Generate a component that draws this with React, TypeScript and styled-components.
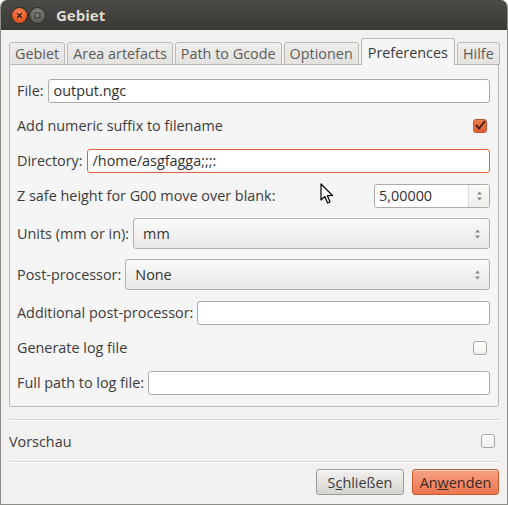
import React from "react";
import styled, { createGlobalStyle } from "styled-components";

const Global = createGlobalStyle`
  html, body { margin: 0; padding: 0; background: #ffffff; }
  body { font-family: "Open Sans", "DejaVu Sans", sans-serif; font-size: 14.4px; color: #3c3c3c; }
`;

const Window = styled.div`
  position: relative;
  width: 508px;
  height: 505px;
  box-sizing: border-box;
  display: flex;
  flex-direction: column;
  background: #f2f1f0;
  border-radius: 7px 7px 0 0;
  overflow: hidden;
  border-left: 1px solid #8f8d89;
  border-right: 1px solid #8f8d89;
  border-bottom: 1px solid #8f8d89;
`;

const TitleBar = styled.div`
  height: 30px;
  flex: none;
  display: flex;
  align-items: center;
  padding-left: 11px;
  gap: 3px;
  background: linear-gradient(#4b4a46, #3a3935);
`;

const RoundButton = styled.div<{ $close?: boolean }>`
  width: 15px;
  height: 15px;
  border-radius: 50%;
  display: flex;
  align-items: center;
  justify-content: center;
  background: ${(p) =>
    p.$close
      ? "radial-gradient(circle at 50% 35%, #f78a5e, #e35420 70%)"
      : "radial-gradient(circle at 50% 35%, #8e8c88, #5e5d59 70%)"};
  box-shadow: 0 0 0 1px #2e2d29;
`;

const Title = styled.div`
  margin-left: 8px;
  color: #dfdbd2;
  font-weight: bold;
  font-size: 15px;
`;

const Body = styled.div`
  flex: 1;
  display: flex;
  flex-direction: column;
  padding: 9px 8px 0 8px;
`;

const TabRow = styled.div`
  display: flex;
  align-items: flex-end;
  gap: 2px;
  height: 26px;
  position: relative;
  z-index: 1;
  margin-bottom: -1px;
`;

const Tab = styled.div<{ $active?: boolean }>`
  height: ${(p) => (p.$active ? "27px" : "23px")};
  box-sizing: border-box;
  padding: 0 ${(p) => (p.$active ? "6px" : "5px")};
  display: flex;
  align-items: center;
  border: 1px solid #bdbab5;
  border-bottom: ${(p) => (p.$active ? "none" : "1px solid #bdbab5")};
  border-radius: 3px 3px 0 0;
  background: ${(p) => (p.$active ? "#f5f5f5" : "linear-gradient(#eeedeb, #e3e2df)")};
  color: ${(p) => (p.$active ? "#3c3c3c" : "#5d5d5b")};
  white-space: nowrap;
`;

const Panel = styled.div`
  height: 343px;
  box-sizing: border-box;
  border: 1px solid #bdbab5;
  border-radius: 0 3px 3px 3px;
  background: #f5f5f5;
  padding: 13px 8px 0 7px;
  display: flex;
  flex-direction: column;
  gap: 10px;
`;

const Row = styled.div<{ $h?: number }>`
  height: ${(p) => p.$h ?? 25}px;
  display: flex;
  align-items: center;
  gap: 4px;
`;

const Label = styled.span`
  white-space: nowrap;
  flex: none;
`;

const Spacer = styled.div`
  flex: 1;
`;

const Entry = styled.div<{ $focus?: boolean; $w?: number }>`
  flex: ${(p) => (p.$w ? "none" : "1")};
  width: ${(p) => (p.$w ? `${p.$w}px` : "auto")};
  height: 24px;
  box-sizing: border-box;
  border: 1px solid ${(p) => (p.$focus ? "#e0643a" : "#aeaba6")};
  border-radius: 3px;
  background: #ffffff;
  display: flex;
  align-items: center;
  padding-left: 5px;
  color: #2f2f2f;
  overflow: hidden;
`;

const Spin = styled(Entry)`
  padding-left: 4px;
  justify-content: space-between;
  padding-right: 0;
`;

const SpinArrows = styled.div`
  width: 20px;
  height: 100%;
  border-left: 1px solid #dedcd9;
  display: flex;
  align-items: center;
  justify-content: center;
  background: linear-gradient(#fbfbfa, #eeedeb);
`;

const Combo = styled.div`
  flex: 1;
  height: 31px;
  box-sizing: border-box;
  border: 1px solid #b3b0ab;
  border-radius: 3px;
  background: linear-gradient(#fafafa, #e9e8e6);
  display: flex;
  align-items: center;
  justify-content: space-between;
  padding: 0 8px 0 9px;
  color: #333;
`;

const Check = styled.div<{ $on?: boolean }>`
  width: 14px;
  height: 14px;
  box-sizing: border-box;
  border-radius: 3px;
  border: 1px solid ${(p) => (p.$on ? "#b8532f" : "#a9a6a1")};
  background: ${(p) => (p.$on ? "linear-gradient(#ee7a4f, #dd5f32)" : "linear-gradient(#ffffff, #f1f0ee)")};
  display: flex;
  align-items: center;
  justify-content: center;
  margin-right: 3px;
  flex: none;
`;

const Separator = styled.div`
  height: 1px;
  background: #d9d7d3;
  border-bottom: 1px solid #ffffff;
`;

const Gap = styled.div`
  height: 12px;
`;

const PreviewRow = styled.div`
  height: 40px;
  display: flex;
  align-items: center;
  justify-content: space-between;
  padding: 0 1px 0 0;
`;

const Buttons = styled.div`
  display: flex;
  justify-content: flex-end;
  gap: 8px;
  padding-top: 6px;
`;

const Button = styled.div<{ $primary?: boolean }>`
  height: 26px;
  box-sizing: border-box;
  width: ${(p) => (p.$primary ? "87px" : "88px")};
  border-radius: 3px;
  border: 1px solid ${(p) => (p.$primary ? "#c65a33" : "#9d9b97")};
  background: ${(p) =>
    p.$primary ? "linear-gradient(#f7a283, #ec7550)" : "linear-gradient(#f2f1ef, #d6d4d0)"};
  color: ${(p) => (p.$primary ? "#3d2a24" : "#3c3c3c")};
  display: flex;
  align-items: center;
  justify-content: center;
  box-shadow: inset 0 1px 0 rgba(255, 255, 255, 0.5);
`;

const Cursor = styled.svg`
  position: absolute;
  left: 319px;
  top: 183px;
`;

const UpDown = () => (
  <svg width="7" height="12" viewBox="0 0 7 12">
    <path d="M3.5 1.5 L6 4.5 H1 Z" fill="#8a8884" />
    <path d="M3.5 10.5 L6 7.5 H1 Z" fill="#8a8884" />
  </svg>
);

export default function App() {
  return (
    <>
      <Global />
      <Window>
        <TitleBar>
          <RoundButton $close>
            <svg width="7" height="7" viewBox="0 0 7 7">
              <path d="M1 1 L6 6 M6 1 L1 6" stroke="#3b1a0c" strokeWidth="1.4" />
            </svg>
          </RoundButton>
          <RoundButton>
            <svg width="7" height="7" viewBox="0 0 7 7">
              <rect x="1" y="1" width="5" height="5" fill="none" stroke="#3a3935" strokeWidth="1.2" />
            </svg>
          </RoundButton>
          <Title>Gebiet</Title>
        </TitleBar>
        <Body>
          <TabRow>
            <Tab>Gebiet</Tab>
            <Tab>Area artefacts</Tab>
            <Tab>Path to Gcode</Tab>
            <Tab>Optionen</Tab>
            <Tab $active>Preferences</Tab>
            <Tab>Hilfe</Tab>
          </TabRow>
          <Panel>
            <Row>
              <Label>File:</Label>
              <Entry>output.ngc</Entry>
            </Row>
            <Row>
              <Label>Add numeric suffix to filename</Label>
              <Spacer />
              <Check $on>
                <svg width="12" height="11" viewBox="0 0 12 11">
                  <path d="M2 5 L5 8.5 L11 1" fill="none" stroke="#4a2517" strokeWidth="2" />
                </svg>
              </Check>
            </Row>
            <Row>
              <Label>Directory:</Label>
              <Entry $focus>/home/asgfagga;;;:</Entry>
            </Row>
            <Row>
              <Label>Z safe height for G00 move over blank:</Label>
              <Spacer />
              <Spin $w={116}>
                5,00000
                <SpinArrows>
                  <UpDown />
                </SpinArrows>
              </Spin>
            </Row>
            <Row $h={31}>
              <Label>Units (mm or in):</Label>
              <Combo>
                mm
                <UpDown />
              </Combo>
            </Row>
            <Row $h={31}>
              <Label>Post-processor:</Label>
              <Combo>
                None
                <UpDown />
              </Combo>
            </Row>
            <Row>
              <Label>Additional post-processor:</Label>
              <Entry />
            </Row>
            <Row>
              <Label>Generate log file</Label>
              <Spacer />
              <Check />
            </Row>
            <Row>
              <Label>Full path to log file:</Label>
              <Entry />
            </Row>
          </Panel>
          <Gap />
          <Separator />
          <PreviewRow>
            Vorschau
            <Check />
          </PreviewRow>
          <Separator />
          <Buttons>
            <Button>
              <span>
                S<u>c</u>hließen
              </span>
            </Button>
            <Button $primary>
              <span>
                An<u>w</u>enden
              </span>
            </Button>
          </Buttons>
        </Body>
        <Cursor width="14" height="22" viewBox="0 0 14 22">
          <path d="M1 1 L1 17 L4.8 13.4 L7.6 20 L10 19 L7.3 12.6 L12.5 12.5 Z" fill="#ffffff" stroke="#000000" strokeWidth="1.2" strokeLinejoin="round" />
        </Cursor>
      </Window>
    </>
  );
}
